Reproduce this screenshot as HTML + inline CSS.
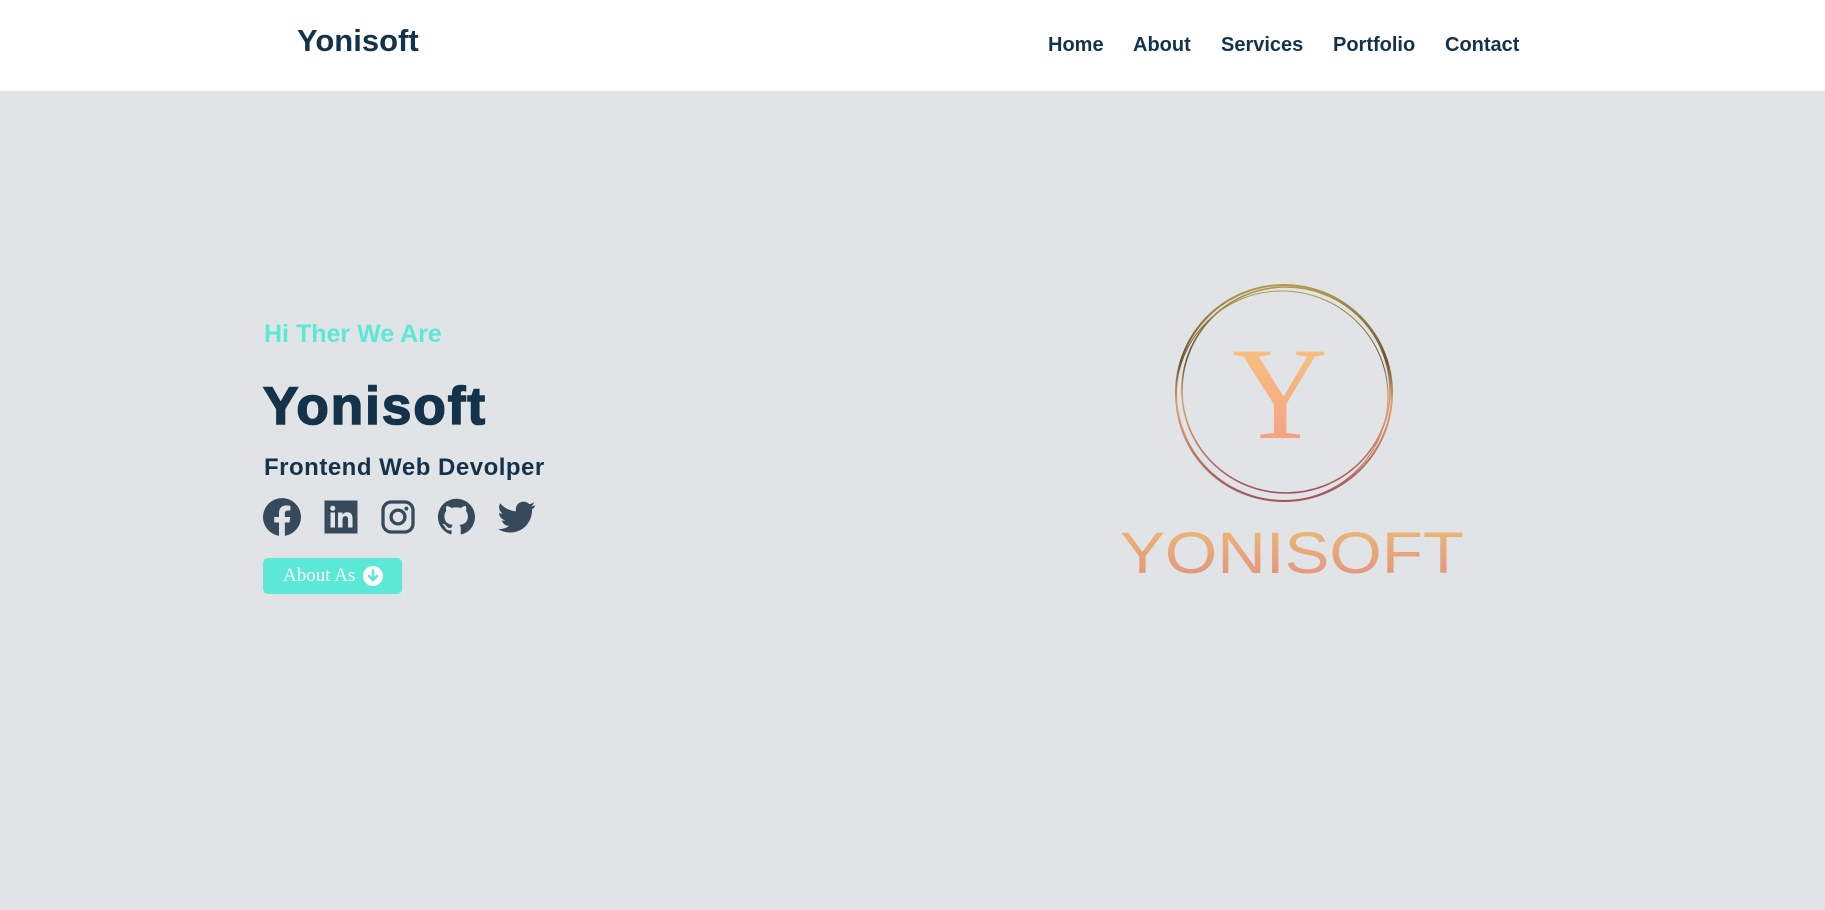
<!DOCTYPE html>
<html><head><meta charset="utf-8"><style>
*{margin:0;padding:0;box-sizing:border-box}
body{width:1825px;height:910px;background:#e0e4e7;font-family:"Liberation Sans",Arial,sans-serif;position:relative;overflow:hidden}
.nav{position:absolute;left:0;top:0;width:1825px;height:91px;background:#fff}
.t{position:absolute;white-space:nowrap;line-height:1}
.dk{color:#14324a;font-weight:bold}
.nl{font-size:20px;top:35px;color:#14324a;font-weight:bold}
.ic{position:absolute;top:498px;width:38px;height:38px}
</style></head><body>
<div class="nav"></div>
<div class="t dk" style="left:297px;top:25px;font-size:31px">Yonisoft</div>
<div class="t nl" style="left:1048px">Home</div>
<div class="t nl" style="left:1133px">About</div>
<div class="t nl" style="left:1221px">Services</div>
<div class="t nl" style="left:1333px">Portfolio</div>
<div class="t nl" style="left:1445px">Contact</div>

<div class="t" style="left:264px;top:322px;font-size:25px;font-weight:bold;color:#5ce8d6">Hi Ther We Are</div>
<div class="t dk" style="left:263px;top:380px;font-size:53px;letter-spacing:2px;-webkit-text-stroke:1.6px #14324a">Yonisoft</div>
<div class="t dk" style="left:264px;top:456px;font-size:24px;letter-spacing:0.5px">Frontend Web Devolper</div>

<svg class="ic" style="left:263px" viewBox="0 0 24 24"><path fill="#364a5c" d="M24 12a12 12 0 1 0-13.9 11.9v-8.4H7.1V12h3V9.4c0-3 1.8-4.7 4.5-4.7 1.3 0 2.7.2 2.7.2v3h-1.5c-1.5 0-2 .9-2 1.9V12h3.4l-.5 3.5h-2.9v8.4A12 12 0 0 0 24 12z"/></svg>
<svg class="ic" style="left:323px;width:36px" viewBox="0 0 24 24"><path fill="#364a5c" d="M1 1h22v22H1z"/><path fill="#e0e4e7" d="M5 9h3v10H5zM6.5 4.5a1.7 1.7 0 1 1 0 3.4 1.7 1.7 0 0 1 0-3.4zM10 9h3v1.4c.5-.9 1.6-1.6 3.1-1.6 3 0 3.6 2 3.6 4.6V19h-3v-5c0-1.2 0-2.600-1.600-2.600S13 12.600 13 13.900V19h-3z"/></svg>
<svg class="ic" style="left:380px;width:36px" viewBox="0 0 24 24"><rect x="2" y="2" width="20" height="20" rx="5.5" fill="none" stroke="#364a5c" stroke-width="2.2"/><circle cx="12" cy="12" r="4.6" fill="none" stroke="#364a5c" stroke-width="2.2"/><circle cx="17.6" cy="6.4" r="1.3" fill="#364a5c"/></svg>
<svg class="ic" style="left:437px" viewBox="0 0 24 24"><path fill="#364a5c" d="M12 .5a11.5 11.5 0 0 0-3.6 22.4c.6.1.8-.3.8-.6v-2c-3.2.7-3.900-1.500-3.900-1.500-.5-1.300-1.300-1.700-1.300-1.700-1-.7.1-.7.1-.7 1.2.1 1.8 1.2 1.8 1.2 1 1.8 2.7 1.3 3.4 1 .1-.8.4-1.300.7-1.600-2.600-.3-5.300-1.300-5.300-5.700 0-1.300.4-2.300 1.200-3.100-.1-.3-.5-1.500.1-3.100 0 0 1-.3 3.200 1.200a11 11 0 0 1 5.800 0c2.200-1.500 3.200-1.200 3.200-1.200.6 1.600.2 2.800.1 3.100.7.8 1.200 1.900 1.200 3.100 0 4.400-2.700 5.400-5.300 5.700.4.4.8 1.100.8 2.200v3.200c0 .3.2.7.8.6A11.5 11.5 0 0 0 12 .5z"/></svg>
<svg class="ic" style="left:498px" viewBox="0 0 24 24"><path fill="#364a5c" d="M23.6 4.6c-.9.4-1.8.6-2.8.8 1-.6 1.8-1.6 2.1-2.7-.9.6-2 1-3.1 1.2a4.9 4.9 0 0 0-8.4 4.5C7.4 8.2 3.8 6.2 1.4 3.3a4.9 4.9 0 0 0 1.5 6.6c-.8 0-1.6-.2-2.2-.6 0 2.4 1.7 4.4 3.9 4.8-.7.2-1.5.2-2.2.1.6 2 2.4 3.4 4.6 3.4A9.9 9.9 0 0 1 0 19.6 14 14 0 0 0 7.5 21.8c9.1 0 14-7.5 14-14v-.6c1-.7 1.8-1.6 2.1-2.6z"/></svg>

<div style="position:absolute;left:263px;top:558px;width:139px;height:36px;background:#5ce8d6;border-radius:5px"></div>
<div class="t" style="left:283px;top:566px;font-family:'Liberation Serif',serif;font-size:19px;color:#fff">About As</div>
<svg style="position:absolute;left:363px;top:566px" width="20" height="20" viewBox="0 0 20 20"><circle cx="10" cy="10" r="10" fill="#fff"/><path d="M10 4.5v9M6 10l4 4 4-4" stroke="#5ce8d6" stroke-width="2.6" fill="none" stroke-linecap="round"/></svg>

<svg style="position:absolute;left:1100px;top:270px" width="400" height="320" viewBox="1100 270 400 320">
<defs>
<linearGradient id="g" x1="0" y1="0" x2="0" y2="1"><stop offset="0" stop-color="#f9c97e"/><stop offset="1" stop-color="#f39a86"/></linearGradient>
<linearGradient id="r" x1="0" y1="0" x2="0" y2="1"><stop offset="0" stop-color="#b49a4e"/><stop offset=".35" stop-color="#6a5530"/><stop offset=".55" stop-color="#e0a070"/><stop offset="1" stop-color="#a2525a"/></linearGradient>
<linearGradient id="tg" x1="0" y1="0" x2="0" y2="1"><stop offset="0" stop-color="#ecbb70"/><stop offset="1" stop-color="#e38f82"/></linearGradient>
</defs>
<ellipse cx="1284" cy="393" rx="108" ry="108" fill="none" stroke="url(#r)" stroke-width="2"/>
<ellipse cx="1286" cy="390" rx="104" ry="103" fill="none" stroke="url(#r)" stroke-width="1.6"/>
<ellipse cx="1282" cy="396" rx="106" ry="105" fill="none" stroke="url(#r)" stroke-width="1"/>
<text x="1280" y="438" text-anchor="middle" font-family="Liberation Serif,serif" font-size="132" fill="url(#g)">Y</text>
<text x="1120" y="573" font-family="Liberation Sans,sans-serif" font-size="58" textLength="344" lengthAdjust="spacingAndGlyphs" fill="url(#tg)">YONISOFT</text>
</svg>
</body></html>
